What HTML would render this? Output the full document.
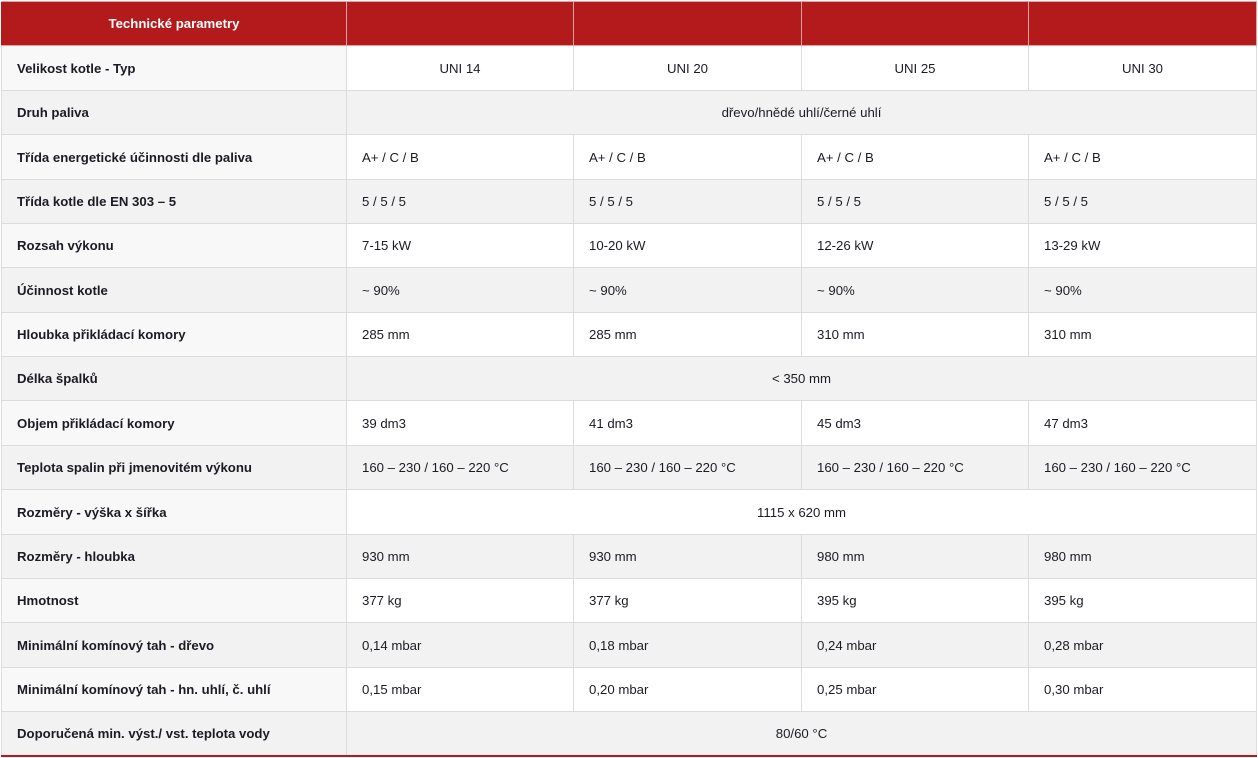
<!DOCTYPE html>
<html><head><meta charset="utf-8"><style>
body{margin:0;background:#fff;width:1258px;height:758px;overflow:hidden;font-family:"Liberation Sans",sans-serif;font-size:13.2px;color:#1b1b24}
table{position:absolute;left:1px;top:1px;border-collapse:collapse;table-layout:fixed;width:1255px;border-bottom:2px solid #b31a1c}
td,th{border:1px solid #dcdcdc;padding:0 15px;box-sizing:border-box}
th{background:#b31a1c;color:#fff;font-weight:bold;border-color:#e6a0a0;font-size:13.2px}
th:first-child{border-left-color:#b31a1c}
td:first-child{font-weight:bold;background:#f8f8f8}
tr:nth-child(odd) td{background:#f2f2f2}
tr.o td:first-child{background:#f8f8f8}
.c{text-align:center}
</style></head><body>
<table>
<colgroup><col style="width:345px"><col style="width:227px"><col style="width:228px"><col style="width:227px"><col style="width:228px"></colgroup>
<tr style="height:44px"><th>Technické parametry</th><th></th><th></th><th></th><th></th></tr>
<tr class="o" style="height:45px"><td>Velikost kotle - Typ</td><td class="c">UNI 14</td><td class="c">UNI 20</td><td class="c">UNI 25</td><td class="c">UNI 30</td></tr>
<tr style="height:44px"><td>Druh paliva</td><td colspan="4" class="c">dřevo/hnědé uhlí/černé uhlí</td></tr>
<tr class="o" style="height:45px"><td>Třída energetické účinnosti dle paliva</td><td>A+ / C / B</td><td>A+ / C / B</td><td>A+ / C / B</td><td>A+ / C / B</td></tr>
<tr style="height:44px"><td>Třída kotle dle EN 303 – 5</td><td>5 / 5 / 5</td><td>5 / 5 / 5</td><td>5 / 5 / 5</td><td>5 / 5 / 5</td></tr>
<tr class="o" style="height:44px"><td>Rozsah výkonu</td><td>7-15 kW</td><td>10-20 kW</td><td>12-26 kW</td><td>13-29 kW</td></tr>
<tr style="height:45px"><td>Účinnost kotle</td><td>~ 90%</td><td>~ 90%</td><td>~ 90%</td><td>~ 90%</td></tr>
<tr class="o" style="height:44px"><td>Hloubka přikládací komory</td><td>285 mm</td><td>285 mm</td><td>310 mm</td><td>310 mm</td></tr>
<tr style="height:44px"><td>Délka špalků</td><td colspan="4" class="c">&lt; 350 mm</td></tr>
<tr class="o" style="height:45px"><td>Objem přikládací komory</td><td>39 dm3</td><td>41 dm3</td><td>45 dm3</td><td>47 dm3</td></tr>
<tr style="height:44px"><td>Teplota spalin při jmenovitém výkonu</td><td>160 – 230 / 160 – 220 °C</td><td>160 – 230 / 160 – 220 °C</td><td>160 – 230 / 160 – 220 °C</td><td>160 – 230 / 160 – 220 °C</td></tr>
<tr class="o" style="height:45px"><td>Rozměry - výška x šířka</td><td colspan="4" class="c">1115 x 620 mm</td></tr>
<tr style="height:44px"><td>Rozměry - hloubka</td><td>930 mm</td><td>930 mm</td><td>980 mm</td><td>980 mm</td></tr>
<tr class="o" style="height:44px"><td>Hmotnost</td><td>377 kg</td><td>377 kg</td><td>395 kg</td><td>395 kg</td></tr>
<tr style="height:45px"><td>Minimální komínový tah - dřevo</td><td>0,14 mbar</td><td>0,18 mbar</td><td>0,24 mbar</td><td>0,28 mbar</td></tr>
<tr class="o" style="height:44px"><td>Minimální komínový tah - hn. uhlí, č. uhlí</td><td>0,15 mbar</td><td>0,20 mbar</td><td>0,25 mbar</td><td>0,30 mbar</td></tr>
<tr style="height:44px"><td>Doporučená min. výst./ vst. teplota vody</td><td colspan="4" class="c">80/60 °C</td></tr>
</table>
</body></html>
